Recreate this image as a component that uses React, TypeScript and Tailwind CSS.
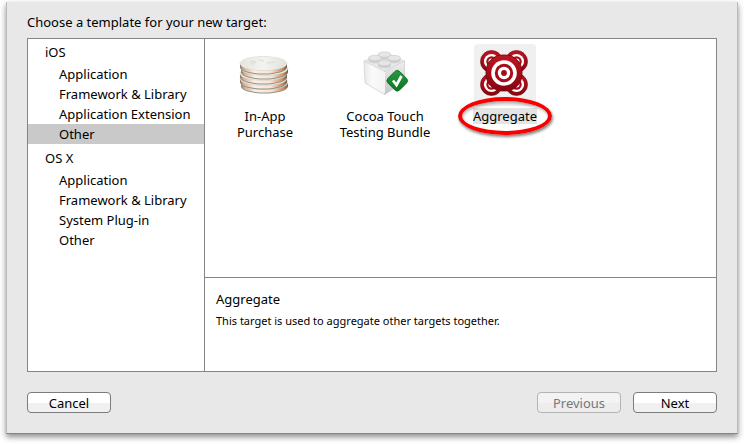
import { useState } from 'react';

const GROUPS = [
  { name: 'iOS', items: ['Application', 'Framework & Library', 'Application Extension', 'Other'] },
  { name: 'OS X', items: ['Application', 'Framework & Library', 'System Plug-in', 'Other'] },
];

const CoinsIcon = () => (
  <svg viewBox="0 0 62 62" className="w-full h-full" aria-hidden="true">
    <defs>
      <linearGradient id="coinEdge" x1="0" x2="1">
        <stop offset="0" stopColor="#8d7362" />
        <stop offset="0.08" stopColor="#dcb090" />
        <stop offset="0.3" stopColor="#fdeee2" />
        <stop offset="0.65" stopColor="#fae3d2" />
        <stop offset="0.9" stopColor="#cf8f62" />
        <stop offset="1" stopColor="#6f5240" />
      </linearGradient>
      <linearGradient id="coinFace" x1="0" x2="1">
        <stop offset="0" stopColor="#e3e5df" />
        <stop offset="0.5" stopColor="#f3f4f0" />
        <stop offset="1" stopColor="#dfe2da" />
      </linearGradient>
    </defs>
    {[40, 36, 31, 26, 21].map((y, i) => {
      const x = [7, 6, 6, 7, 6][i];
      return (
        <g key={y}>
          <path d={`M${x} ${y - 1} v3.500 a23.500 7 0 0 0 47 0 v-3.500z`} fill="#8f938d" />
          <path d={`M${x} ${y - 1} v2.500 a23.500 7 0 0 0 47 0 v-2.500z`} fill="url(#coinEdge)" />
          <ellipse cx={x + 23.5} cy={y - 1.5} rx="23.500" ry="7" fill="#eff0ec" stroke="#c9ccc5" strokeWidth="0.5" />
        </g>
      );
    })}
    <ellipse cx="29.500" cy="19.500" rx="22.500" ry="6.500" fill="url(#coinFace)" />
    <path d="M17 18l2-1.500 1 1.500 2-0.500-3 3zM25 16l5 1M33 19l8-1" fill="none" stroke="#cfd2ca" strokeWidth="0.7" />
  </svg>
);

const STUDS = [[30.5, 10.5], [21, 14], [40, 14], [30.5, 19]];

const BrickIcon = () => (
  <svg viewBox="0 0 62 62" className="w-full h-full" aria-hidden="true">
    <defs>
      <linearGradient id="brickLeft" x1="0" y1="0" x2="1" y2="0">
        <stop offset="0" stopColor="#e9e9e9" />
        <stop offset="0.4" stopColor="#fafafa" />
        <stop offset="1" stopColor="#f3f3f3" />
      </linearGradient>
      <linearGradient id="brickRight" x1="0" y1="0" x2="0" y2="1">
        <stop offset="0" stopColor="#efefef" />
        <stop offset="1" stopColor="#c4c4c4" />
      </linearGradient>
      <linearGradient id="badge" x1="0" y1="0" x2="1" y2="1">
        <stop offset="0" stopColor="#2c9a42" />
        <stop offset="1" stopColor="#0a741f" />
      </linearGradient>
    </defs>
    <path d="M10 17L30.500 27V50.500L11 39z" fill="url(#brickLeft)" stroke="#cfcfcf" strokeWidth="0.7" />
    <path d="M30.500 27L50.500 17V38L30.500 50.500z" fill="url(#brickRight)" stroke="#c8c8c8" strokeWidth="0.7" />
    <path d="M10 17L30.500 9L50.500 17L30.500 27z" fill="#e9e9e9" stroke="#d6d6d6" strokeWidth="0.7" />
    {STUDS.map(([x, y]) => (
      <g key={`${x}-${y}`}>
        <path d={`M${x - 6.5} ${y} v2.500 a6.500 2.800 0 0 0 13 0 v-2.500z`} fill="#cfcfcf" />
        <ellipse cx={x} cy={y} rx="6.500" ry="2.700" fill="#e6e6e6" stroke="#c2c2c2" strokeWidth="0.5" />
      </g>
    ))}
    <path d="M30.500 28V49" stroke="#fff" strokeWidth="0.8" />
    <rect x="35" y="28.500" width="16.500" height="16.500" rx="3.500" fill="url(#badge)" stroke="#0d6b20" strokeWidth="0.8" transform="rotate(45 43.250 36.750)" />
    <path d="M39 36.500l3.500 4.500 5-9" fill="none" stroke="#fff" strokeWidth="2.800" />
  </svg>
);

const Rings = ({ x, y }: { x: number; y: number }) => (
  <g>
    <circle cx={x} cy={y} r="11" fill="url(#ringRed)" stroke="#6d0610" strokeWidth="0.6" />
    <circle cx={x} cy={y} r="7.600" fill="#fff" />
    <circle cx={x} cy={y} r="5.200" fill="#a80c18" />
    <circle cx={x} cy={y} r="3" fill="#fff" />
  </g>
);

const TargetIcon = () => (
  <svg viewBox="0 0 62 62" className="w-full h-full" aria-hidden="true">
    <defs>
      <linearGradient id="ringRed" x1="0" y1="0" x2="0" y2="1">
        <stop offset="0" stopColor="#c01420" />
        <stop offset="1" stopColor="#85050f" />
      </linearGradient>
    </defs>
    <Rings x={17.5} y={17.5} />
    <Rings x={42.5} y={17.5} />
    <Rings x={17.5} y={40.5} />
    <Rings x={42.5} y={40.5} />
    <rect x="12" y="11" width="36" height="36" rx="16.500" fill="url(#ringRed)" stroke="#6d0610" strokeWidth="0.8" />
    <circle cx="30" cy="29" r="12.800" fill="#fff" />
    <circle cx="30" cy="29" r="9.200" fill="#a80c18" />
    <circle cx="30" cy="29" r="6.200" fill="#fff" />
    <circle cx="30" cy="29" r="2.900" fill="#a80c18" />
  </svg>
);

const TEMPLATES = [
  { name: 'In-App Purchase', Icon: CoinsIcon, description: '' },
  { name: 'Cocoa Touch Testing Bundle', Icon: BrickIcon, description: '' },
  { name: 'Aggregate', Icon: TargetIcon, description: 'This target is used to aggregate other targets together.' },
];

const BUTTON =
  'w-[84px] h-[21px] flex items-center justify-center rounded border border-[#7c7c7c] bg-linear-to-b from-white from-50% to-[#f0f0f0] to-50% disabled:border-[#b4b4b4] disabled:from-[#f3f3f3] disabled:to-[#ededed] disabled:text-[#777]';

export default function App() {
  const [category, setCategory] = useState('iOS/Other');
  const [selected, setSelected] = useState(2);
  const current = TEMPLATES[selected];

  return (
    <div className="min-h-screen flex bg-white px-[6px] pt-[2px] pb-[10px] font-['Noto_Sans',sans-serif] text-[13px] leading-4 text-black">
      <main className="flex-1 flex flex-col bg-[#e8e8e8] border-x border-b border-x-[#b9b9b9] border-b-[#858585] shadow-[0_3px_6px_rgba(0,0,0,0.45)] px-5 pt-[10px] pb-5">
        <h1 className="leading-5 mb-[6px]">Choose a template for your new target:</h1>

        <div className="flex-1 flex bg-white border border-[#858585]">
          <nav className="w-[177px] shrink-0 border-r border-[#858585] pt-[3px]">
            {GROUPS.map((group) => (
              <section key={group.name} className="mb-1">
                <h2 className="pl-[17px] leading-5 mb-[2px]">{group.name}</h2>
                <ul>
                  {group.items.map((item) => {
                    const id = `${group.name}/${item}`;
                    return (
                      <li key={id}>
                        <button
                          onClick={() => setCategory(id)}
                          className={`block w-full h-5 pl-[31px] text-left whitespace-nowrap ${id === category ? 'bg-[#c9c9c9]' : ''}`}
                        >
                          {item}
                        </button>
                      </li>
                    );
                  })}
                </ul>
              </section>
            ))}
          </nav>

          <div className="flex-1 flex flex-col">
            <div className="flex-1 flex items-start pt-[5px]">
              {TEMPLATES.map(({ name, Icon }, i) => (
                <button key={name} onClick={() => setSelected(i)} className="w-[120px] flex flex-col items-center">
                  <span className={`w-[62px] h-[62px] rounded ${i === selected ? 'bg-[#f0f0f0]' : ''}`}>
                    <Icon />
                  </span>
                  <span className={`relative mt-[2px] max-w-[100px] ${i === selected ? 'bg-[#e4e4e4]' : ''}`}>
                    {name}
                    {i === selected && (
                      <span className="absolute -inset-x-[15px] -inset-y-[11px] rounded-[50%] border-4 border-[#f80000] shadow-[1px_2px_3px_rgba(0,0,0,0.5),inset_1px_2px_3px_rgba(0,0,0,0.3)]" />
                    )}
                  </span>
                </button>
              ))}
            </div>
            <section className="h-[94px] border-t border-[#858585] px-[11px] pt-[13px]">
              <h2 className="mb-[6px]">{current.name}</h2>
              <p className="text-[11px]">{current.description}</p>
            </section>
          </div>
        </div>

        <footer className="flex items-center mt-5">
          <button className={BUTTON}>Cancel</button>
          <button className={`${BUTTON} ml-auto`} disabled>Previous</button>
          <button className={`${BUTTON} ml-3`}>Next</button>
        </footer>
      </main>
    </div>
  );
}
